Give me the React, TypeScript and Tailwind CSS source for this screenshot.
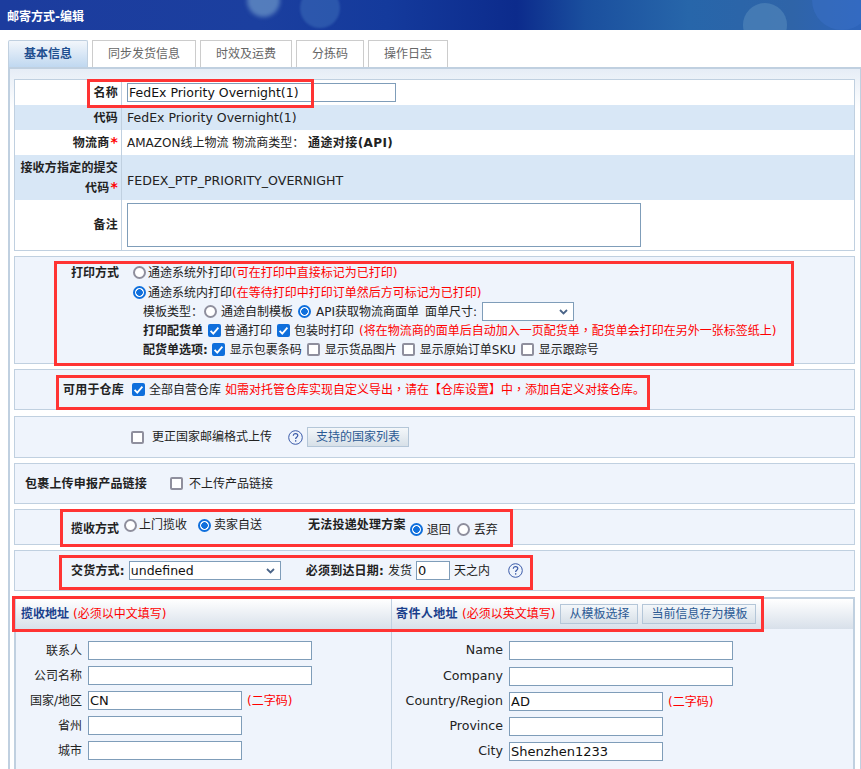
import type { ReactNode } from "react";

const FONT = "font-['DejaVu_Sans','Noto_Sans_CJK_SC',sans-serif]";

function Box({ className }: { className: string }) {
  return <div className={`pointer-events-none absolute border-[3px] border-[#ff3333] ${className}`} />;
}

function Check({ checked = false, className = "" }: { checked?: boolean; className?: string }) {
  return (
    <span className={`relative inline-flex h-[13px] w-[13px] shrink-0 ${className}`}>
      <input
        type="checkbox"
        defaultChecked={checked}
        className="m-0 h-[13px] w-[13px] appearance-none rounded-[2px] border-2 border-[#8f8f9d] bg-white checked:border-[#0f6fdc] checked:bg-[#0f6fdc]"
      />
      {checked && (
        <svg viewBox="0 0 13 13" className="pointer-events-none absolute inset-0 h-[13px] w-[13px]">
          <path d="M2.6 6.8 5.3 9.6 10.4 3.6" fill="none" stroke="#fff" strokeWidth="1.8" />
        </svg>
      )}
    </span>
  );
}

function Radio({ checked = false, name, className = "" }: { checked?: boolean; name: string; className?: string }) {
  return (
    <input
      type="radio"
      name={name}
      defaultChecked={checked}
      className={`m-0 h-[13px] w-[13px] shrink-0 appearance-none rounded-full border-2 border-[#8f8f9d] bg-white checked:border-[#0f6fdc] checked:bg-[radial-gradient(circle,#0f6fdc_0,#0f6fdc_3px,#fff_3.6px)] ${className}`}
    />
  );
}

function Help() {
  return (
    <svg width="15" height="15" viewBox="0 0 15 15" className="shrink-0">
      <circle cx="7.5" cy="7.5" r="6.8" fill="none" stroke="#3a5aa8" strokeWidth="1" />
      <path d="M5.3 5.8c0-1.4 1-2.2 2.3-2.2s2.2.8 2.2 1.9c0 1.7-2.2 1.7-2.2 3.4" fill="none" stroke="#3a5aa8" strokeWidth="1.2" />
      <rect x="7" y="10.2" width="1.3" height="1.4" fill="#3a5aa8" />
    </svg>
  );
}

function Btn({ children, className = "" }: { children: string; className?: string }) {
  return (
    <button className={`h-[20px] border border-[#b4c6d8] bg-gradient-to-b from-[#f4f7fa] to-[#d7e0e8] text-[12px] leading-none text-[#2c5a94] ${className}`}>
      {children}
    </button>
  );
}

function Field({ w, value = "", className = "", size = "text-[13px]" }: { w: string; value?: string; className?: string; size?: string }) {
  return (
    <input
      readOnly
      value={value}
      className={`box-border h-[19px] border border-[#7f9db9] bg-white px-[1px] text-[#111] outline-none ${size} ${w} ${className}`}
    />
  );
}

function Select({ w, children, className = "" }: { w: string; children?: ReactNode; className?: string }) {
  return (
    <span className={`relative inline-flex shrink-0 ${w} ${className}`}>
      <select className="box-border h-[19px] w-full appearance-none border border-[#7f9db9] bg-white pl-[1px] text-[12.5px] text-[#111] outline-none">
        {children}
      </select>
      <svg viewBox="0 0 9 6" className="pointer-events-none absolute right-[6px] top-[7px] h-[6px] w-[9px]">
        <path d="M1 1 4.5 4.4 8 1" fill="none" stroke="#4a6488" strokeWidth="1.8" />
      </svg>
    </span>
  );
}

function Row({ label, bg, h, children }: { label: ReactNode; bg: string; h: string; children: ReactNode }) {
  return (
    <div className={`flex ${bg} ${h}`}>
      <div className="flex w-[107px] shrink-0 items-center justify-end border-r border-[#c0d0e0] pr-[3px] text-right text-[12px] font-bold leading-[20px] tracking-[0.2px] text-[#222]">
        {label}
      </div>
      <div className="flex min-w-0 flex-1 items-center pl-[5px] text-[12px] text-[#222]">{children}</div>
    </div>
  );
}

function Section({ h, children, className = "" }: { h: string; children: ReactNode; className?: string }) {
  return <div className={`box-border border border-[#c0d0e0] bg-[#eff4fc] text-[12px] text-[#222] ${h} ${className}`}>{children}</div>;
}

function AddrRow({ label, labelW, latin = false, children, mt }: { label: string; labelW: string; latin?: boolean; children: ReactNode; mt: string }) {
  return (
    <div className={`flex items-center ${mt}`}>
      <div className={`mr-[6px] shrink-0 text-right text-[#222] ${latin ? "text-[12.6px]" : "text-[12px]"} ${labelW}`}>{label}</div>
      {children}
    </div>
  );
}

const Star = () => <span className="ml-[1px] text-[14px] leading-none text-[#f00]">*</span>;
const Red = ({ children, className = "" }: { children: ReactNode; className?: string }) => <span className={`text-[#f00] ${className}`}>{children}</span>;
const Comma = () => <span className="font-['Noto_Sans_CJK_TC',sans-serif]">，</span>;

export default function App() {
  return (
    <div className={`relative h-[769px] w-[861px] overflow-hidden bg-white ${FONT}`}>
      <header className="relative flex h-[30px] items-center overflow-hidden bg-[linear-gradient(90deg,#1c3c9e_0%,#1b3f9f_30%,#143a9c_45%,#0c2b8c_60%,#1a4f9e_68%,#2766aa_80%,#2f64a8_92%,#2d64bb_100%)] pl-[7px] pt-[3px]">
        <div className="absolute left-[247px] top-[-16px] h-[33px] w-[33px] rounded-full bg-[#7ba6d0]/60 blur-[2px]" />
        <div className="absolute left-[300px] top-[-12px] h-[40px] w-[40px] rounded-full bg-[#3f72bc]/50 blur-[1px]" />
        <div className="absolute left-[743px] top-[3px] h-[44px] w-[44px] rounded-full bg-[#5c90c0]/50" />
        <div className="absolute left-[812px] top-[-30px] h-[60px] w-[60px] rounded-full bg-[#3a70c8]/50" />
        <span className="relative text-[12px] font-bold text-white">邮寄方式-编辑</span>
      </header>

      <nav className="flex h-[37px] items-end gap-[4px] pl-[8px] text-[12px]">
        <div className="box-border flex h-[27px] w-[80px] items-center justify-center rounded-t-[2px] border border-b-0 border-[#c0d0e0] bg-gradient-to-b from-[#f2f6fb] to-[#c0d8f0] font-bold text-[#1f4f8f]">基本信息</div>
        <div className="box-border flex h-[27px] w-[104px] items-center justify-center border border-b-0 border-[#ccc] text-[#666]">同步发货信息</div>
        <div className="box-border flex h-[27px] w-[92px] items-center justify-center border border-b-0 border-[#ccc] text-[#666]">时效及运费</div>
        <div className="box-border flex h-[27px] w-[68px] items-center justify-center border border-b-0 border-[#ccc] text-[#666]">分拣码</div>
        <div className="box-border flex h-[27px] w-[80px] items-center justify-center border border-b-0 border-[#ccc] text-[#666]">操作日志</div>
      </nav>

      <main className="ml-[8px] box-border h-[702px] border-l-2 border-r border-t-2 border-[#c0d0e0] bg-gradient-to-b from-[#e6edf6] to-white to-[40px] pl-[4px] pr-[5px] pt-[10px]">
        <div className="box-border h-[172px] border border-[#c0d0e0] bg-white">
          <Row label="名称" bg="bg-white" h="h-[25px]"><Field w="w-[269px]" size="text-[12.5px]" value="FedEx Priority Overnight(1)" /></Row>
          <Row label="代码" bg="bg-[#d8e7f6]" h="h-[25px]"><span className="mt-[2px] text-[12.5px]">FedEx Priority Overnight(1)</span></Row>
          <Row label={<span>物流商<Star /></span>} bg="bg-white" h="h-[25px]">
            <span>AMAZON线上物流 物流商类型： <b className="tracking-[0.4px]">通途对接(API)</b></span>
          </Row>
          <Row label={<span>接收方指定的提交<br />代码<Star /></span>} bg="bg-[#d8e7f6]" h="h-[45px]"><span className="mt-[8px] text-[12.6px]">FEDEX_PTP_PRIORITY_OVERNIGHT</span></Row>
          <Row label="备注" bg="bg-white" h="h-[50px]">
            <textarea readOnly className="box-border h-[44px] w-[514px] resize-none border border-[#7f9db9] bg-white outline-none" />
          </Row>
        </div>

        <Section h="h-[108px]" className="mt-[5px] pl-[56px] pt-[6px]">
          <div className="flex h-[19px] items-center">
            <b className="w-[62px]">打印方式</b>
            <Radio name="a" className="mr-[2px]" />
            <span>通途系统外打印</span><Red>(可在打印中直接标记为已打印)</Red>
          </div>
          <div className="mt-[1px] flex h-[19px] items-center">
            <span className="w-[62px]" />
            <Radio name="a" checked className="mr-[2px]" />
            <span>通途系统内打印</span><Red>(在等待打印中打印订单然后方可标记为已打印)</Red>
          </div>
          <div className="flex h-[19px] items-center pl-[72px]">
            <span>模板类型：</span>
            <Radio name="b" className="ml-[1px] mr-[4px]" />
            <span>通途自制模板</span>
            <Radio name="b" checked className="mx-[5px]" />
            <span>API获取物流商面单</span>
            <span className="ml-[6px]">面单尺寸:</span>
            <Select w="w-[92px]" className="ml-[5px]" />
          </div>
          <div className="flex h-[19px] items-center pl-[72px]">
            <b>打印配货单</b>
            <Check checked className="ml-[5px] mr-[3px]" />
            <span>普通打印</span>
            <Check checked className="ml-[5px] mr-[4px]" />
            <span>包装时打印</span>
            <Red className="ml-[5px]">(将在物流商的面单后自动加入一页配货单<Comma />配货单会打印在另外一张标签纸上)</Red>
          </div>
          <div className="flex h-[19px] items-center pl-[72px]">
            <b>配货单选项:</b>
            <Check checked className="ml-[4px] mr-[5px]" />
            <span>显示包裹条码</span>
            <Check className="mx-[5px]" />
            <span>显示货品图片</span>
            <Check className="mx-[5px]" />
            <span>显示原始订单SKU</span>
            <Check className="mx-[5px]" />
            <span>显示跟踪号</span>
          </div>
        </Section>

        <Section h="h-[41px]" className="mt-[5px] flex items-center pl-[48px]">
          <b className="tracking-[0.2px]">可用于仓库</b>
          <Check checked className="ml-[8px] mr-[4px]" />
          <span>全部自营仓库</span>
          <Red className="ml-[4px]">如需对托管仓库实现自定义导出<Comma />请在【仓库设置】中<Comma />添加自定义对接仓库。</Red>
        </Section>

        <Section h="h-[42px]" className="mt-[6px] flex items-center pl-[116px]">
          <Check className="mr-[8px]" />
          <span>更正国家邮编格式上传</span>
          <span className="ml-[16px] mr-[4px] flex"><Help /></span>
          <Btn className="w-[102px]">支持的国家列表</Btn>
        </Section>

        <Section h="h-[41px]" className="mt-[5px] flex items-center pl-[10px]">
          <b className="tracking-[0.2px]">包裹上传申报产品链接</b>
          <Check className="ml-[23px] mr-[6px]" />
          <span>不上传产品链接</span>
        </Section>

        <Section h="h-[36px]" className="mt-[5px] flex items-center pl-[56px]">
          <b className="mt-[4px]">揽收方式</b>
          <Radio name="c" className="mb-[4px] ml-[5px] mr-[2px]" />
          <span className="mb-[4px]">上门揽收</span>
          <Radio name="c" checked className="mb-[4px] ml-[11px] mr-[3px]" />
          <span className="mb-[4px]">卖家自送</span>
          <b className="mb-[4px] ml-[46px] tracking-[0.2px]">无法投递处理方案</b>
          <Radio name="d" checked className="ml-[4px] mr-[4px] mt-[5px]" />
          <span className="mt-[5px]">退回</span>
          <Radio name="d" className="ml-[6px] mr-[4px] mt-[5px]" />
          <span className="mt-[5px]">丢弃</span>
        </Section>

        <Section h="h-[41px]" className="mt-[5px] flex items-center pl-[56px]">
          <b className="tracking-[0.2px]">交货方式:</b>
          <Select w="w-[152px]" className="ml-[4px]"><option>undefined</option></Select>
          <b className="ml-[25px] tracking-[0.2px]">必须到达日期:</b>
          <span className="ml-[4px]">发货</span>
          <Field w="w-[34px]" value="0" className="ml-[4px]" />
          <span className="ml-[4px]">天之内</span>
          <span className="ml-[18px] flex"><Help /></span>
        </Section>

        <div className="mt-[6px] box-border flex h-[180px] border-x-2 border-t-2 border-[#c0d0e0] bg-[#eff4fc]">
          <div className="w-[376px] shrink-0 border-r border-[#c0d0e0]">
            <div className="flex h-[30px] items-center bg-gradient-to-b from-white to-[#d8e0ea] pl-[5px] text-[12px]">
              <b className="text-[#1a3f8c]">揽收地址</b><Red className="ml-[4px]">(必须以中文填写)</Red>
            </div>
            <div className="pt-[12px]">
              <AddrRow label="联系人" labelW="w-[66px]" mt=""><Field w="w-[224px]" /></AddrRow>
              <AddrRow label="公司名称" labelW="w-[66px]" mt="mt-[6px]"><Field w="w-[224px]" /></AddrRow>
              <AddrRow label="国家/地区" labelW="w-[66px]" mt="mt-[6px]"><Field w="w-[154px]" value="CN" /><Red className="ml-[5px] text-[12px]">(二字码)</Red></AddrRow>
              <AddrRow label="省州" labelW="w-[66px]" mt="mt-[6px]"><Field w="w-[154px]" /></AddrRow>
              <AddrRow label="城市" labelW="w-[66px]" mt="mt-[6px]"><Field w="w-[154px]" /></AddrRow>
            </div>
          </div>
          <div className="min-w-0 flex-1">
            <div className="flex h-[30px] items-center bg-gradient-to-b from-white to-[#d8e0ea] pl-[4px] text-[12px]">
              <b className="tracking-[0.4px] text-[#1a3f8c]">寄件人地址</b><Red className="ml-[4px]">(必须以英文填写)</Red>
              <Btn className="ml-[5px] w-[78px]">从模板选择</Btn>
              <Btn className="ml-[4px] w-[114px]">当前信息存为模板</Btn>
            </div>
            <div className="pt-[12px]">
              <AddrRow latin label="Name" labelW="w-[111px]" mt=""><Field w="w-[224px]" /></AddrRow>
              <AddrRow latin label="Company" labelW="w-[111px]" mt="mt-[7px]"><Field w="w-[224px]" /></AddrRow>
              <AddrRow latin label="Country/Region" labelW="w-[111px]" mt="mt-[6px]"><Field w="w-[154px]" value="AD" /><Red className="ml-[5px] text-[12px]">(二字码)</Red></AddrRow>
              <AddrRow latin label="Province" labelW="w-[111px]" mt="mt-[6px]"><Field w="w-[154px]" /></AddrRow>
              <AddrRow latin label="City" labelW="w-[111px]" mt="mt-[6px]"><Field w="w-[154px]" value="Shenzhen1233" /></AddrRow>
            </div>
          </div>
        </div>
      </main>

      <Box className="left-[87px] top-[79px] h-[29px] w-[227px]" />
      <Box className="left-[54px] top-[261px] h-[105px] w-[740px]" />
      <Box className="left-[56px] top-[375px] h-[35px] w-[594px]" />
      <Box className="left-[60px] top-[509px] h-[38px] w-[453px]" />
      <Box className="left-[59px] top-[555px] h-[35px] w-[474px]" />
      <Box className="left-[12px] top-[596px] h-[36px] w-[752px]" />
    </div>
  );
}
